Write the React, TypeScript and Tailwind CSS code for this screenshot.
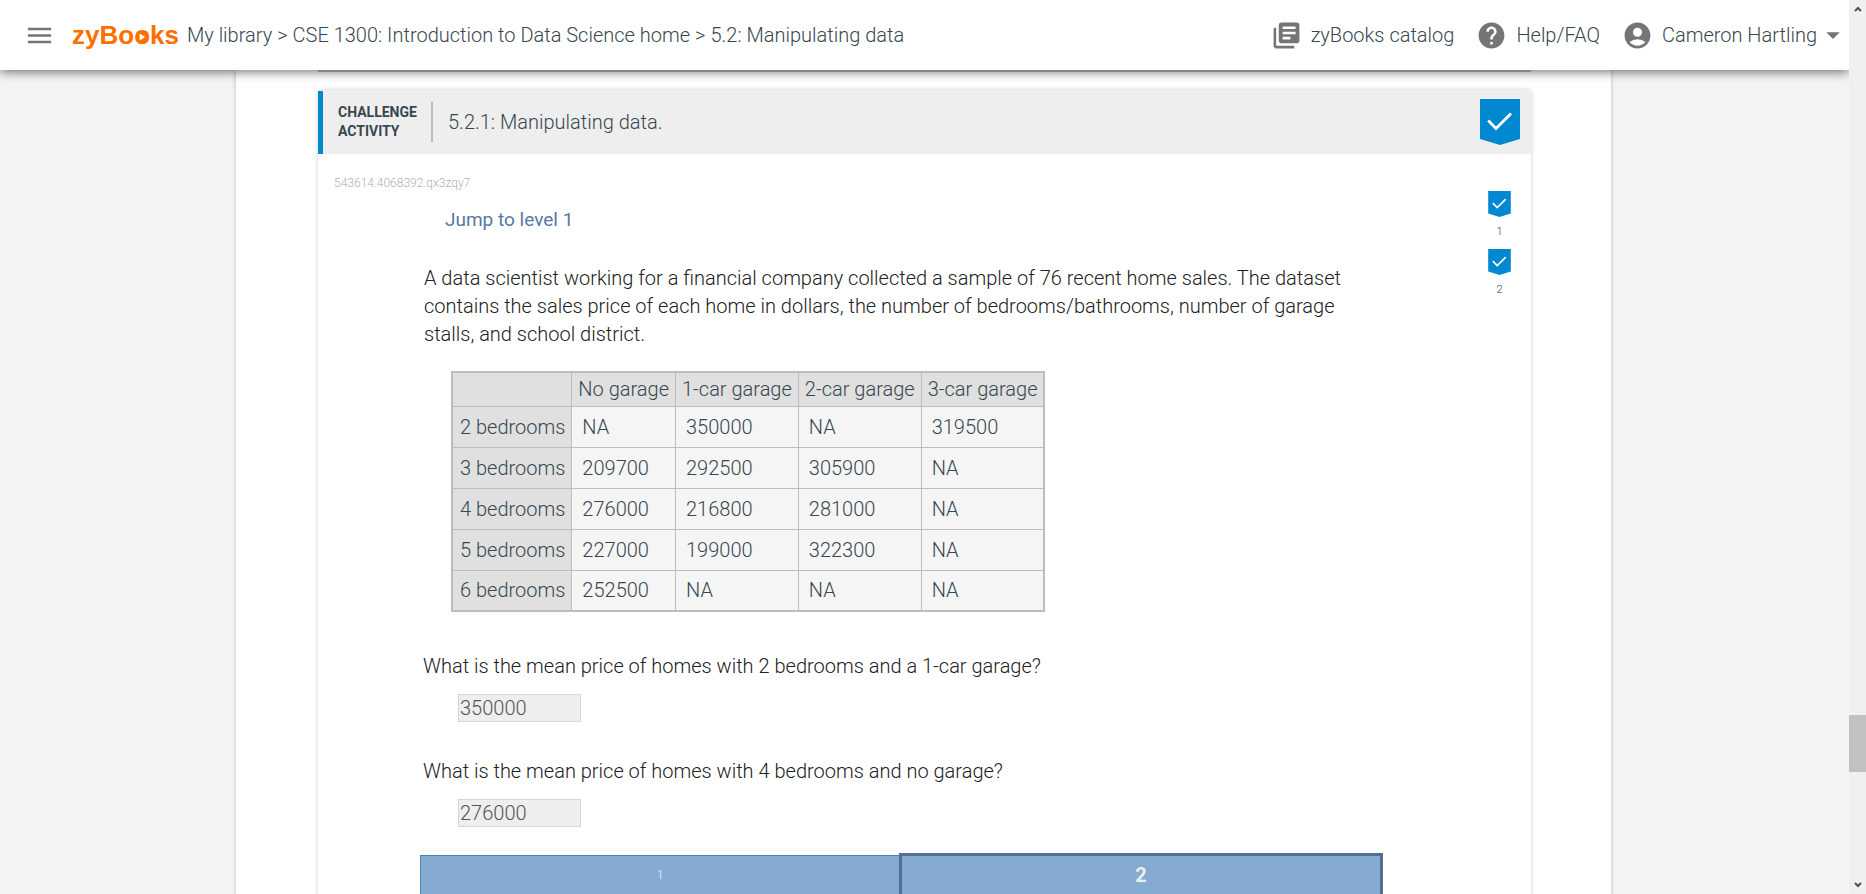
import React from "react";
import { MdAccountCircle, MdArrowDropDown, MdHelp, MdLibraryBooks, MdMenu } from "react-icons/md";

const columns = ["No garage", "1-car garage", "2-car garage", "3-car garage"];

const rows: { label: string; values: string[] }[] = [
  { label: "2 bedrooms", values: ["NA", "350000", "NA", "319500"] },
  { label: "3 bedrooms", values: ["209700", "292500", "305900", "NA"] },
  { label: "4 bedrooms", values: ["276000", "216800", "281000", "NA"] },
  { label: "5 bedrooms", values: ["227000", "199000", "322300", "NA"] },
  { label: "6 bedrooms", values: ["252500", "NA", "NA", "NA"] },
];

const questions = [
  { id: "q1", text: "What is the mean price of homes with 2 bedrooms and a 1-car garage?", answer: "350000" },
  { id: "q2", text: "What is the mean price of homes with 4 bedrooms and no garage?", answer: "276000" },
];

function Badge({ className }: { className: string }) {
  return (
    <svg viewBox="0 0 40 46" className={className} aria-hidden="true">
      <path d="M0 0H40V40L20 46L0 40Z" fill="#0288d1" />
      <path d="M8.2 21.5L16 29.4L31 14.4" fill="none" stroke="#fff" strokeWidth="2.8" />
    </svg>
  );
}

function Logo() {
  return (
    <a href="#" className="ml-[17px] font-['Liberation_Sans',sans-serif] text-[26px] leading-8 font-bold text-[#ff6f00]">
      zyBo
      <span className="relative">
        o
        <svg viewBox="0 0 10 12" className="absolute top-[11px] left-[3px] h-3 w-[10px]" aria-hidden="true">
          <ellipse cx="5" cy="6" rx="4.6" ry="5.4" fill="#ff6f00" />
          <path d="M2.6 2.6L8.2 6L2.6 9.4Z" fill="#fff" />
        </svg>
      </span>
      ks
    </a>
  );
}

function TopBar() {
  return (
    <header className="relative z-10 flex h-[70px] shrink-0 items-center bg-white pl-6 text-[#37474f] shadow-[0_2px_10px_rgba(0,0,0,0.55)]">
      <button type="button" aria-label="Menu" className="text-[#757575]">
        <MdMenu size={31} />
      </button>
      <Logo />
      <nav className="ml-2 flex gap-[5px]" aria-label="Breadcrumb">
        <a href="#">My library</a>
        <span>&gt;</span>
        <a href="#">CSE 1300: Introduction to Data Science home</a>
        <span>&gt;</span>
        <span>5.2: Manipulating data</span>
      </nav>
      <div className="ml-auto flex items-center gap-[22px]">
        <a href="#" className="flex items-center gap-[9px]">
          <MdLibraryBooks size={31} className="text-[#757575]" />
          zyBooks catalog
        </a>
        <a href="#" className="flex items-center gap-[9px]">
          <MdHelp size={31} className="text-[#757575]" />
          Help/FAQ
        </a>
        <button type="button" className="flex items-center gap-[9px]">
          <MdAccountCircle size={31} className="text-[#757575]" />
          <span className="flex items-center">
            Cameron Hartling
            <MdArrowDropDown size={32} className="text-[#757575]" />
          </span>
        </button>
      </div>
    </header>
  );
}

function PriceTable() {
  return (
    <table className="mt-[23px] ml-[31px] border-collapse border-2 border-[#bdbdbd] text-left text-[#37474f]">
      <thead>
        <tr className="h-[34px] bg-[#e0e0e0]">
          <td className="border border-[#bdbdbd]" />
          {columns.map((c) => (
            <th key={c} scope="col" className="border border-[#bdbdbd] px-1.5 font-light whitespace-nowrap">
              {c}
            </th>
          ))}
        </tr>
      </thead>
      <tbody>
        {rows.map((r) => (
          <tr key={r.label} className="h-[41px]">
            <th scope="row" className="border border-[#bdbdbd] bg-[#e0e0e0] pr-1.5 pl-[7px] font-light whitespace-nowrap">
              {r.label}
            </th>
            {r.values.map((v, i) => (
              <td key={i} className="border border-[#bdbdbd] bg-[#f5f5f5] px-[10px]">
                {v}
              </td>
            ))}
          </tr>
        ))}
      </tbody>
    </table>
  );
}

function Activity() {
  return (
    <section className="mt-[18px] rounded-t-sm bg-white shadow-[0_0_5px_rgba(0,0,0,0.2)]">
      <div className="flex h-16 items-stretch bg-[#eeeeee] pr-[11px] text-[#37474f]">
        <div className="mt-px w-[5px] bg-[#0288d1]" />
        <h2 className="my-auto ml-[15px] w-[93px] text-sm leading-[19px] font-bold">
          CHALLENGE
          <br />
          ACTIVITY
        </h2>
        <div className="my-3 w-0.5 bg-[#bdbdbd]" />
        <p className="my-auto ml-[15px]">5.2.1: Manipulating data.</p>
        <Badge className="mt-[9px] ml-auto h-[46px] w-10" />
      </div>

      <div className="flex pt-5 pl-4">
        <div className="flex-1">
          <p className="text-xs leading-[18px] text-[#b0b0b0]">543614.4068392.qx3zqy7</p>
          <div className="mr-3 ml-[86px] max-w-[963px]">
            <button type="button" className="mt-4 ml-[25px] block text-[19px] leading-6 font-normal text-[#5579a5]">
              Jump to level 1
            </button>
            <p className="mt-8 pr-6 pl-1 leading-7 text-[#212121]">
              A data scientist working for a financial company collected a sample of 76 recent home sales. The
              dataset contains the sales price of each home in dollars, the number of bedrooms/bathrooms, number of
              garage stalls, and school district.
            </p>
            <PriceTable />
            <div className="mt-10 flex flex-col gap-[35px] text-[#212121]">
              {questions.map((q) => (
                <div key={q.id} className="flex flex-col">
                  <label htmlFor={q.id} className="pl-[3px] leading-7">
                    {q.text}
                  </label>
                  <input
                    id={q.id}
                    type="text"
                    readOnly
                    defaultValue={q.answer}
                    className="mt-[14px] ml-[38px] h-7 w-[123px] border border-[#cfd8dc] bg-[#eeeeee] px-px text-[#545454]"
                  />
                </div>
              ))}
            </div>
            <div className="mt-[26px] flex items-end pb-10">
              <button
                type="button"
                className="h-[46px] flex-1 border border-r-0 border-[#5080ad] bg-[#86abd2] pb-1.5 text-[13px] text-[#eeeeee]"
              >
                1
              </button>
              <button
                type="button"
                className="h-12 flex-1 border-3 border-[#546e94] bg-[#86abd2] pb-1 font-bold text-[#eeeeee]"
              >
                2
              </button>
            </div>
          </div>
        </div>
        <ol className="mt-[17px] mr-5 flex w-[23px] flex-col gap-[9px]">
          {[1, 2].map((n) => (
            <li key={n} className="flex flex-col items-center text-[#37474f]">
              <Badge className="h-[26px] w-[23px]" />
              <span className="mt-[7px] text-[11px] leading-4">{n}</span>
            </li>
          ))}
        </ol>
      </div>
    </section>
  );
}

function ScrollTrack() {
  return (
    <div className="relative z-20 flex w-[17px] shrink-0 flex-col items-center bg-[#f0f0f0] py-1.5" aria-hidden="true">
      <svg viewBox="0 0 8 6" className="h-1.5 w-2">
        <path d="M1 5L4 2L7 5" fill="none" stroke="#505050" strokeWidth="2" />
      </svg>
      <div className="flex w-full flex-1 flex-col">
        <div className="grow-[703]" />
        <div className="h-[57px] bg-[#c1c1c1]" />
        <div className="grow-[110]" />
      </div>
      <svg viewBox="0 0 8 6" className="h-1.5 w-2">
        <path d="M1 1L4 4L7 1" fill="none" stroke="#505050" strokeWidth="2" />
      </svg>
    </div>
  );
}

export default function App() {
  return (
    <div className="flex h-screen font-['Roboto',sans-serif] text-xl leading-7 font-light">
      <div className="flex min-w-0 flex-1 flex-col bg-[#f4f4f4]">
        <TopBar />
        <main className="min-h-0 flex-1 overflow-y-auto pr-0.5 [scrollbar-width:none]">
          <div className="mx-auto max-w-[1375px] bg-white pr-20 pl-[82px] shadow-[0_0_4px_rgba(0,0,0,0.25)]">
            <div className="h-0.5 bg-[#c4c4c4]" />
            <Activity />
          </div>
        </main>
      </div>
      <ScrollTrack />
    </div>
  );
}
